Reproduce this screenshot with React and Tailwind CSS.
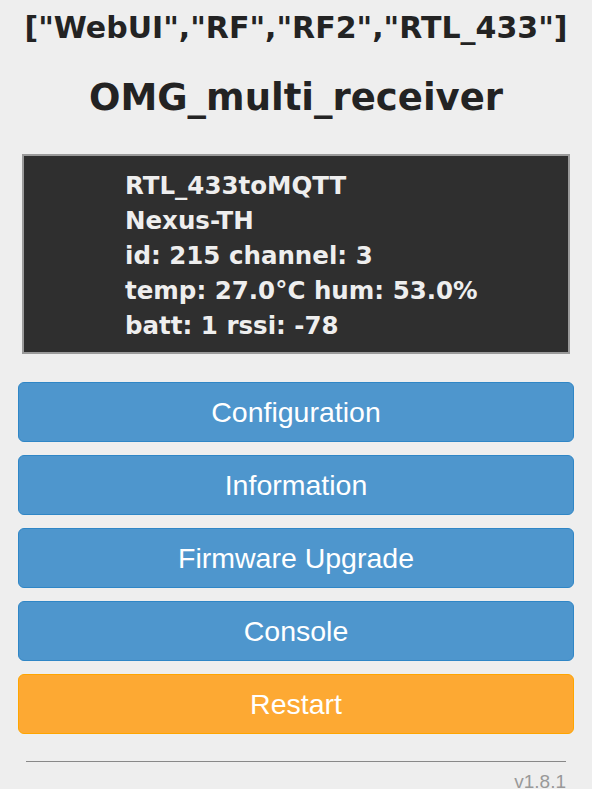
import React from "react";

const buttons = [
  { label: "Configuration", tone: "blue" },
  { label: "Information", tone: "blue" },
  { label: "Firmware Upgrade", tone: "blue" },
  { label: "Console", tone: "blue" },
  { label: "Restart", tone: "orange" },
];

const lines = [
  "RTL_433toMQTT",
  "Nexus-TH",
  "id: 215 channel: 3",
  "temp: 27.0°C hum: 53.0%",
  "batt: 1 rssi: -78",
];

const App = () => {
  return (
    <div className="min-h-[789px] w-full bg-[#eeeeee] px-[18px] text-[#232323] font-['DejaVu_Sans',sans-serif]">
      <h2 className="pt-[11px] text-center text-[30px] font-bold leading-[34px]">
        ["WebUI","RF","RF2","RTL_433"]
      </h2>
      <h1 className="mt-[31px] text-center text-[37px] font-bold leading-[44px]">
        OMG_multi_receiver
      </h1>

      <div className="mx-[4px] mt-[34px] h-[200px] border-2 border-[#9a9a9a] bg-[#2f2f2f] pl-[101px] pt-[12px]">
        {lines.map((line) => (
          <div
            key={line}
            className="text-[24.5px] font-bold leading-[35px] text-[#eeeeee]"
          >
            {line}
          </div>
        ))}
      </div>

      <div className="mt-[28px] flex flex-col gap-[13px]">
        {buttons.map((b) => (
          <button
            key={b.label}
            className={
              b.tone === "blue"
                ? "h-[60px] w-full rounded-[6px] border border-[#2f86c6] bg-[#4e96cd] text-[28.5px] text-white font-['Liberation_Sans',sans-serif]"
                : "h-[60px] w-full rounded-[6px] border border-[#ffa500] bg-[#fda933] text-[28.5px] text-white font-['Liberation_Sans',sans-serif]"
            }
          >
            {b.label}
          </button>
        ))}
      </div>

      <div className="mx-[8px] mt-[27px] border-t border-[#888888]"></div>
      <div className="mr-[8px] mt-[9px] text-right text-[19px] leading-[22px] text-[#999999] font-['Liberation_Sans',sans-serif]">
        v1.8.1
      </div>
    </div>
  );
};

export default App;
